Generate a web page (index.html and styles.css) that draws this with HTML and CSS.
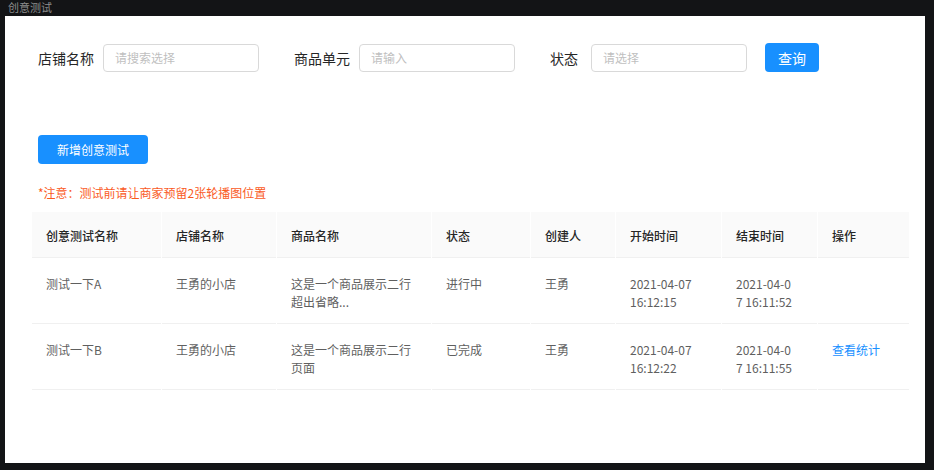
FILE: index.html
```html
<!DOCTYPE html>
<html lang="zh-CN">
<head>
<meta charset="utf-8">
<title>创意测试</title>
<link rel="stylesheet" href="styles.css">
</head>
<body>
<div class="titlebar">创意测试</div>
<div class="panel">
  <div class="filters">
    <div class="field">
      <span class="label">店铺名称</span>
      <input class="input" type="text" placeholder="请搜索选择">
    </div>
    <div class="field">
      <span class="label">商品单元</span>
      <input class="input" type="text" placeholder="请输入">
    </div>
    <div class="field field-last">
      <span class="label label-wide">状态</span>
      <input class="input" type="text" placeholder="请选择">
    </div>
    <button class="btn btn-query">查询</button>
  </div>
  <div class="actions">
    <button class="btn btn-add">新增创意测试</button>
  </div>
  <div class="notice">*注意：测试前请让商家预留2张轮播图位置</div>
  <table class="grid">
    <colgroup>
      <col class="c1"><col class="c2"><col class="c3"><col class="c4"><col class="c5"><col class="c6"><col class="c7"><col class="c8">
    </colgroup>
    <thead>
      <tr>
        <th>创意测试名称</th><th>店铺名称</th><th>商品名称</th><th>状态</th><th>创建人</th><th>开始时间</th><th>结束时间</th><th>操作</th>
      </tr>
    </thead>
    <tbody>
      <tr>
        <td>测试一下A</td><td>王勇的小店</td><td>这是一个商品展示二行<br>超出省略...</td><td>进行中</td><td>王勇</td><td>2021-04-07<br>16:12:15</td><td>2021-04-0<br>7 16:11:52</td><td></td>
      </tr>
      <tr>
        <td>测试一下B</td><td>王勇的小店</td><td>这是一个商品展示二行<br>页面</td><td>已完成</td><td>王勇</td><td>2021-04-07<br>16:12:22</td><td>2021-04-0<br>7 16:11:55</td><td><a class="link" href="#">查看统计</a></td>
      </tr>
    </tbody>
  </table>
</div>
</body>
</html>
```

FILE: styles.css
```css
* { box-sizing: border-box; }
html, body { margin: 0; padding: 0; }
body {
  width: 934px;
  height: 470px;
  overflow: hidden;
  background: #131416;
  font-family: "Noto Sans CJK SC", "Noto Sans", sans-serif;
}
.titlebar {
  height: 16px;
  padding-left: 8px;
  padding-top: 1px;
  font-size: 11px;
  line-height: 13px;
  color: #8c8c8c;
}
.panel {
  margin-left: 5px;
  width: 920px;
  height: 447px;
  background: #fff;
  padding: 27px 15px 0 26px;
}
.filters {
  display: flex;
  align-items: center;
  padding-left: 7px;
  height: 29px;
}
.field {
  display: flex;
  align-items: center;
  margin-right: 35px;
}
.field-last { margin-right: 18px; }
.label {
  font-size: 14px;
  color: #262626;
  margin-right: 9px;
  line-height: 20px;
}
.label-wide { margin-right: 13px; }
.input {
  width: 156px;
  height: 28px;
  border: 1px solid #d9d9d9;
  border-radius: 4px;
  padding: 0 11px;
  font-family: inherit;
  font-size: 12px;
  color: #333;
  outline: none;
}
.input::placeholder { color: #bfbfbf; }
.btn {
  border: 0;
  border-radius: 4px;
  background: #1890ff;
  color: #fff;
  font-family: inherit;
  padding: 0;
  cursor: pointer;
}
.btn-query {
  width: 54px;
  height: 29px;
  font-size: 14px;
}
.actions {
  padding-left: 7px;
  margin-top: 63px;
}
.btn-add {
  width: 110px;
  height: 29px;
  font-size: 12px;
  display: block;
}
.notice {
  padding-left: 7px;
  margin-top: 20px;
  font-size: 12px;
  line-height: 18px;
  color: #fa5a1e;
}
.grid {
  margin-top: 10px;
  width: 879px;
  table-layout: fixed;
  border-collapse: separate;
  border-spacing: 1px 0;
  font-size: 12px;
  line-height: 18px;
}
.c1 { width: 129px; }
.c2 { width: 114px; }
.c3 { width: 154px; }
.c4 { width: 98px; }
.c5 { width: 84px; }
.c6 { width: 105px; }
.c7 { width: 95px; }
.c8 { width: 91px; }
.grid th {
  background: #fafafa;
  color: #262626;
  font-weight: 500;
  text-align: left;
  padding: 15px 6px 12px 14px;
  border-bottom: 1px solid #f0f0f0;
  height: 46px;
}
.grid td {
  color: #5f5f5f;
  vertical-align: top;
  padding: 17px 6px 11px 14px;
  border-bottom: 1px solid #f0f0f0;
  height: 66px;
}
.link {
  color: #1890ff;
  text-decoration: none;
}
```
